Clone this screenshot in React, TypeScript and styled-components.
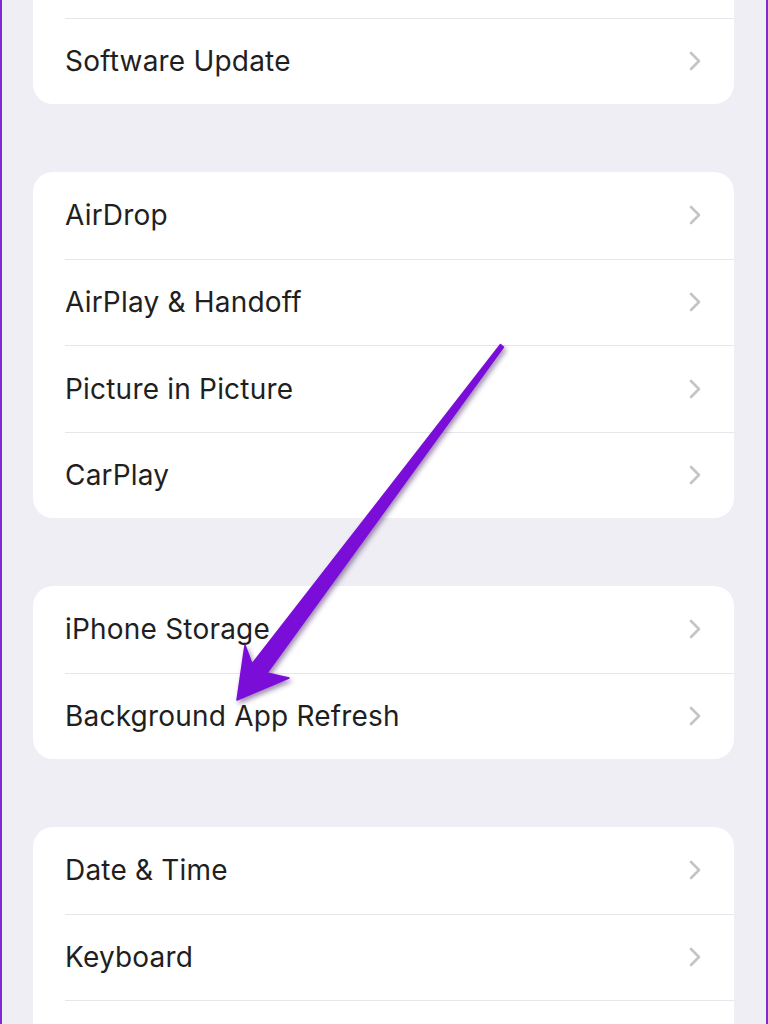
import { createGlobalStyle, styled } from "styled-components";

const GlobalStyle = createGlobalStyle`
  html, body {
    margin: 0;
    padding: 0;
    background: #efeef4;
  }

  body {
    font-family: Inter, "Noto Sans", "Liberation Sans", sans-serif;
    -webkit-font-smoothing: antialiased;
  }
`;

const groups: string[][] = [
  ["About", "Software Update"],
  ["AirDrop", "AirPlay & Handoff", "Picture in Picture", "CarPlay"],
  ["iPhone Storage", "Background App Refresh"],
  ["Date & Time", "Keyboard", "Fonts"],
];

const ChevronIcon = () => (
  <svg width="14" height="22" viewBox="0 0 14 22" fill="none">
    <path
      d="M3 3l8 8-8 8"
      stroke="#c4c4c8"
      strokeWidth="2.6"
      strokeLinecap="round"
      strokeLinejoin="round"
    />
  </svg>
);

// callout arrow pointing at "Background App Refresh"
const PointerArrow = () => (
  <ArrowLayer width="768" height="1024" viewBox="0 0 768 1024">
    <defs>
      <filter id="arrowShadow" x="-20%" y="-20%" width="140%" height="140%">
        <feDropShadow dx="2" dy="3" stdDeviation="2.5" floodColor="#2a0050" floodOpacity="0.45" />
      </filter>
    </defs>
    <polygon
      points="237,700 289,678 267,673 503.5,347 500.5,344.5 252,664 245,645"
      fill="#7a0ad8"
      stroke="#7a0ad8"
      strokeWidth="1.5"
      strokeLinejoin="round"
      filter="url(#arrowShadow)"
    />
  </ArrowLayer>
);

const App = () => {
  return (
    <>
      <GlobalStyle />
      <Screen>
        <List>
          {groups.map((rows, gi) => (
            <Group key={gi}>
              {rows.map((label, ri) => (
                <Row key={label} $first={ri === 0}>
                  <Label>{label}</Label>
                  <ChevronIcon />
                </Row>
              ))}
            </Group>
          ))}
        </List>
        <PointerArrow />
      </Screen>
    </>
  );
};

export default App;

const Screen = styled.div`
  position: relative;
  overflow: hidden;

  width: 768px;
  height: 1024px;
  box-sizing: border-box;

  border-left: 2px solid #7d2ad6;
  border-right: 2px solid #7d2ad6;
  background: #efeef4;
`;

const List = styled.div`
  display: flex;
  flex-direction: column;
  gap: 68px;

  margin-top: -69px;
  padding: 0 32px 0 31px;
`;

const Group = styled.div`
  display: flex;
  flex-direction: column;
  padding-left: 32px;

  border-radius: 20px;
  background: #ffffff;
`;

const Row = styled.div<{ $first: boolean }>`
  display: flex;
  align-items: center;
  justify-content: space-between;
  padding-right: 32px;

  height: 86.5px;
  box-sizing: border-box;

  border-top: ${({ $first }) => ($first ? "none" : "1.5px solid #e6e6ea")};
`;

const Label = styled.span`
  color: #1f1f22;
  font-size: 28px;
  letter-spacing: 0.2px;
`;

const ArrowLayer = styled.svg`
  position: absolute;
  top: 0;
  left: -2px;
  pointer-events: none;
`;
